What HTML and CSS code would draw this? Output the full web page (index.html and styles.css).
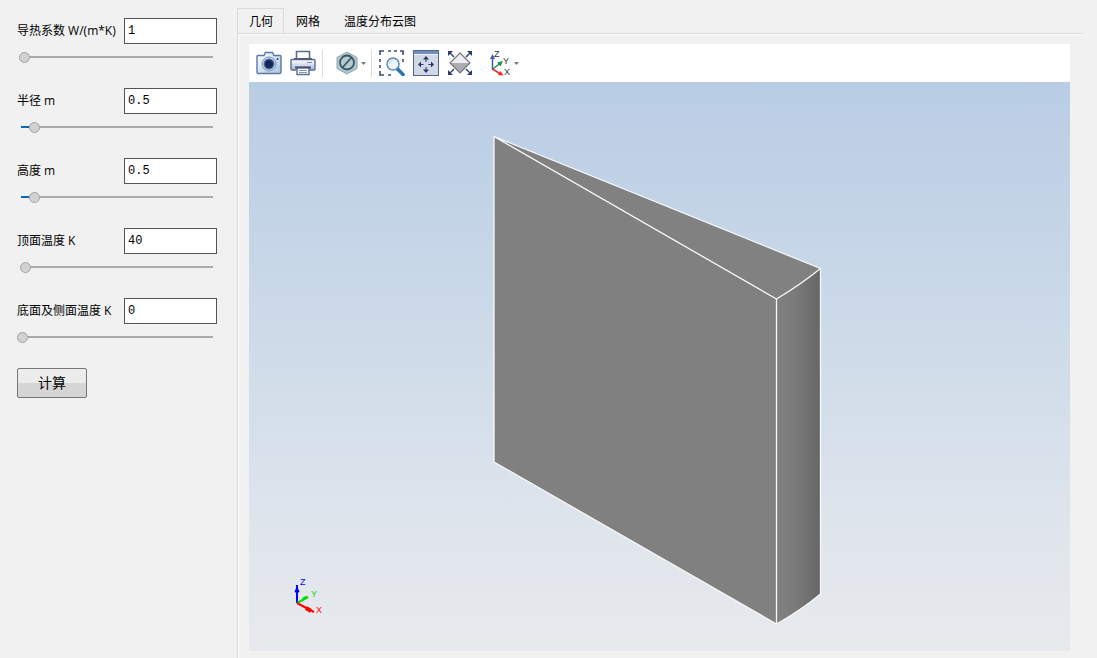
FILE: index.html
```html
<!DOCTYPE html>
<html lang="zh-CN">
<head>
<meta charset="utf-8">
<title>导热计算</title>
<link rel="stylesheet" href="styles.css">
</head>
<body>
<form class="sidebar">
  <div class="param">
    <label class="param-label" for="k">导热系数 W/(m*K)</label>
    <input class="param-value" id="k" type="text" value="1">
    <input class="slider" type="range" aria-label="导热系数" min="0" max="185" value="2" style="--fill:0px">
  </div>
  <div class="param">
    <label class="param-label" for="r">半径 m</label>
    <input class="param-value" id="r" type="text" value="0.5">
    <input class="slider" type="range" aria-label="半径" min="0" max="185" value="12" style="--fill:12px">
  </div>
  <div class="param">
    <label class="param-label" for="h">高度 m</label>
    <input class="param-value" id="h" type="text" value="0.5">
    <input class="slider" type="range" aria-label="高度" min="0" max="185" value="12" style="--fill:12px">
  </div>
  <div class="param">
    <label class="param-label" for="t1">顶面温度 K</label>
    <input class="param-value" id="t1" type="text" value="40">
    <input class="slider" type="range" aria-label="顶面温度" min="0" max="185" value="3" style="--fill:0px">
  </div>
  <div class="param">
    <label class="param-label" for="t2">底面及侧面温度 K</label>
    <input class="param-value" id="t2" type="text" value="0">
    <input class="slider" type="range" aria-label="底面及侧面温度" min="0" max="185" value="0" style="--fill:0px">
  </div>
  <button class="compute" type="button">计算</button>
</form>

<main class="workspace">
  <div class="tabs" role="tablist">
    <button class="tab tab-active" type="button" role="tab" aria-selected="true">几何</button>
    <button class="tab" type="button" role="tab" aria-selected="false">网格</button>
    <button class="tab" type="button" role="tab" aria-selected="false">温度分布云图</button>
  </div>
  <section class="panel" role="tabpanel">
    <div class="toolbar">
      <button class="tool" type="button" aria-label="截图">
        <svg width="26" height="24" viewBox="0 0 26 24">
          <defs><linearGradient id="cam" x1="0" y1="0" x2="1" y2="1"><stop offset="0" stop-color="#fff"/><stop offset="1" stop-color="#a9c4e4"/></linearGradient></defs>
          <path d="M2 4.500h6L9.500 1.500h7L18 4.500H24q1 0 1 1V21q0 1.500-1.500 1.500h-21Q1 22.500 1 21V5.500q0-1 1-1z" fill="url(#cam)" stroke="#5d77a5" stroke-width="1.400"/>
          <circle cx="13" cy="13" r="7" fill="#c8d8eb" stroke="#7f97bb"/>
          <circle cx="13" cy="13" r="5.500" fill="#54709c"/>
          <circle cx="13" cy="13" r="4.200" fill="#14285c"/>
          <circle cx="21.500" cy="8" r="1" fill="#2c4270"/>
        </svg>
      </button>
      <button class="tool" type="button" aria-label="打印">
        <svg width="26" height="26" viewBox="0 0 26 26">
          <defs><linearGradient id="prn" x1="0" y1="0" x2="0" y2="1"><stop offset="0" stop-color="#fff"/><stop offset="1" stop-color="#aab9d2"/></linearGradient></defs>
          <path d="M6.500 10V1.500h13V10" fill="#fff" stroke="#5f6c8c" stroke-width="1.600"/>
          <rect x="1" y="9.500" width="24" height="10.500" rx="1" fill="url(#prn)" stroke="#5f6c91" stroke-width="1.400"/>
          <path d="M4 8h18v2H4z" fill="#525f83"/>
          <path d="M17 12.500h5" stroke="#8190b0"/>
          <path d="M7 17.500h12v7H7z" fill="#fff" stroke="#5f6c91" stroke-width="1.400"/>
          <path d="M5 17.500h16" stroke="#40507a" stroke-width="2"/>
          <path d="M9 20.500h8M9 22.500h8" stroke="#8795b2"/>
        </svg>
      </button>
      <span class="divider"></span>
      <button class="tool tool-menu tool-hex" type="button" aria-label="选择">
        <svg width="22" height="24" viewBox="0 0 22 24">
          <path d="M11 1l10 5.500v11L11 23 1 17.500v-11z" fill="#b4c7cd" stroke="#8da6ae"/>
          <path d="M11 3.500l7.500 4.500v8L11 20.500 3.500 16V8z" fill="#c7d6da"/>
          <circle cx="11" cy="11.500" r="7" fill="#b8cace" stroke="#355967" stroke-width="1.800"/>
          <path d="M6.500 16.500l9-10" stroke="#355967" stroke-width="1.800"/>
        </svg>
        <svg class="caret" width="5" height="3" viewBox="0 0 5 3"><path d="M0 0h5L2.500 3z" fill="#777"/></svg>
      </button>
      <span class="divider"></span>
      <button class="tool" type="button" aria-label="框选缩放">
        <svg width="26" height="26" viewBox="0 0 26 26">
          <path d="M1 5V1h4M9 1h3M15 1h3M21 1h3v4M24 9v3M1 9v3M1 15v3M1 21v4h4M9 25h3" fill="none" stroke="#3c4c78" stroke-width="1.600"/>
          <path d="M18.500 19l5.500 5.500" stroke="#2476b5" stroke-width="3.600" stroke-linecap="round"/>
          <circle cx="14" cy="14" r="6" fill="#edf5fb" stroke="#5d8bac" stroke-width="1.500"/>
          <path d="M10.500 14a4 4 0 0 1 4-4" fill="none" stroke="#b9d6ea"/>
        </svg>
      </button>
      <button class="tool" type="button" aria-label="平移">
        <svg width="26" height="26" viewBox="0 0 26 26">
          <rect x=".5" y=".5" width="25" height="25" fill="#d1d9e6" stroke="#53678d"/>
          <path d="M1 1h24v3H1z" fill="#748fbd"/><path d="M1 4.500h24" stroke="#eef2f8"/>
          <g fill="#26376a"><path d="M13 6l3 3.500h-6zM13 23l3-3.500h-6zM5 14.500l3-3v6zM21 14.500l-3-3v6z"/><path d="M12.500 9h1v3h-1zM12.500 17h1v3h-1zM7 14h3.500v1H7zM15.500 14H19v1h-3.500z"/></g>
        </svg>
      </button>
      <button class="tool" type="button" aria-label="适应窗口">
        <svg width="26" height="26" viewBox="0 0 26 26">
          <path d="M13 3l10 10H3z" fill="#ededef"/><path d="M3 13h20L13 23z" fill="#acacb3"/>
          <path d="M13 3l10 10-10 10L3 13z" fill="none" stroke="#74777f" stroke-width="1.200"/>
          <path d="M2 2l5 5M24 2l-5 5M2 24l5-5M24 24l-5-5" stroke="#2d3d6c" stroke-width="1.400"/>
          <path d="M1 1h5L1 6zM25 1h-5l5 5zM1 25h5l-5-5zM25 25h-5l5-5z" fill="#2d3d6c"/>
        </svg>
      </button>
      <button class="tool tool-menu tool-axis" type="button" aria-label="视角">
        <svg width="22" height="28" viewBox="0 0 22 28">
          <path d="M3.500 21V8" stroke="#3e5cae" stroke-width="1.500"/><path d="M3.500 5l2.500 5H1z" fill="#3e5cae"/>
          <path d="M3.500 20l7-5" stroke="#1d9148" stroke-width="1.500"/><path d="M14 12l-2.500 5.500-3.500-4z" fill="#1d9148"/>
          <path d="M3.500 20l8 5" stroke="#ec2727" stroke-width="1.500"/><path d="M14.500 26.500l-5.500-.5 2.500-4z" fill="#ec2727"/>
          <g class="axis-text" fill="#333"><text x="5" y="8">Z</text><text x="14" y="15">Y</text><text x="15" y="26">X</text></g>
        </svg>
        <svg class="caret" width="5" height="3" viewBox="0 0 5 3"><path d="M0 0h5L2.500 3z" fill="#777"/></svg>
      </button>
    </div>
    <div class="canvas">
      <svg class="scene" viewBox="0 0 821 569" role="img" aria-label="扇形柱体几何">
        <defs><linearGradient id="side" x1="0" y1="0" x2="1" y2="0"><stop offset="0" stop-color="#818181"/><stop offset=".4" stop-color="#7b7b7b"/><stop offset="1" stop-color="#666"/></linearGradient></defs>
        <path d="M245 54.500L571.500 186.500Q551 203 527.500 217z" fill="#818181"/>
        <path d="M245 54.500L527.500 217V542L245 380z" fill="#808080"/>
        <path d="M527.500 217Q551 203 571.500 186.500V512Q551 529 527.500 542z" fill="url(#side)"/>
        <path d="M245 54.500V380L527.500 542Q551 529 571.500 512V186.500Q551 203 527.500 217V542M527.500 217L245 54.500L571.500 186.500" fill="none" stroke="#f8f8f8" stroke-width="1.300" stroke-linejoin="round"/>
        <g fill="none" stroke-width="2">
          <path d="M48 521V503" stroke="#00f"/><path d="M46 510l2-5 2 5z" fill="#00f" stroke="#00f" stroke-width="1"/>
          <path d="M48 521l11-6" stroke="#0d0"/><path d="M54 517l4-2" stroke="#0d0" stroke-width="3"/>
          <path d="M48 521l17 9" stroke="#f00"/><path d="M57 526l5 3" stroke="#f00" stroke-width="4"/>
        </g>
        <g class="triad-text"><text x="51" y="503" fill="#00f">Z</text><text x="62" y="515" fill="#0d0">Y</text><text x="67" y="531" fill="#f00">X</text></g>
      </svg>
    </div>
  </section>
</main>
</body>
</html>
```
FILE: styles.css
```css
* { box-sizing: border-box; }

body {
  margin: 0;
  min-height: 100vh;
  display: flex;
  background: #f1f1f1;
  color: #000;
  font: 12px/16px "Open Sans", "Noto Sans CJK SC", sans-serif;
}

button, input { font: inherit; color: inherit; }

.sidebar {
  flex: 0 0 237px;
  padding: 18px 20px 18px 17px;
}

.param {
  display: grid;
  grid-template-columns: 1fr 93px;
  align-items: center;
  row-gap: 8px;
  height: 70px;
  align-content: start;
}

.param-label { white-space: nowrap; }

.param-value {
  width: 100%;
  height: 26px;
  padding: 0 3px;
  border: 1px solid #555;
  background: #fff;
  font: 12px/24px "Liberation Mono", monospace;
}

.slider {
  grid-column: 1 / -1;
  width: 196px;
  height: 11px;
  margin: 0;
  appearance: none;
  background: transparent;
}

.slider::-webkit-slider-runnable-track {
  height: 11px;
  background:
    linear-gradient(#0a68be, #0a68be) 4px 4px / var(--fill) 2px no-repeat,
    linear-gradient(#aaa, #aaa) 4px 4px / 100% 2px no-repeat;
}

.slider::-webkit-slider-thumb {
  appearance: none;
  width: 11px;
  height: 11px;
  border: 1px solid #a3a3a3;
  border-radius: 50%;
  background: #d2d2d2;
}

.compute {
  width: 70px;
  height: 30px;
  padding: 0;
  border: 1px solid #777;
  border-radius: 2px;
  background: linear-gradient(#ececec 50%, #d5d5d5 50%);
  font-size: 14px;
}

.workspace {
  flex: 1;
  display: flex;
  flex-direction: column;
  padding: 8px 14px 0 0;
}

.tabs { display: flex; height: 26px; }

.tab {
  padding: 1px 12px 0;
  border: 0;
  background: transparent;
}

.tab-active {
  padding: 0 10px 0 11px;
  border: 1px solid #dadada;
  border-bottom: 0;
}

.panel {
  flex: 1;
  display: flex;
  flex-direction: column;
  padding: 10px 12px 7px 11px;
  border: 1px solid #dadada;
  border-right-color: #eee;
  border-bottom: 0;
  box-shadow: inset 1px 1px #fff;
  margin-top: -1px;
}

.toolbar {
  display: flex;
  align-items: center;
  height: 38px;
  padding-left: 7px;
  gap: 8px;
  background: #fff;
}

.tool {
  display: flex;
  align-items: center;
  padding: 0;
  border: 0;
  background: transparent;
}

.tool-menu { gap: 3px; }
.tool-hex { margin: 0 -1px 0 6px; }
.tool-axis { margin-left: 8px; }

.divider {
  width: 1px;
  height: 27px;
  margin: 0 -1px 0 -2px;
  background: #dcdcdc;
}

.axis-text { font: 9px "Liberation Sans", sans-serif; }

.canvas {
  flex: 1;
  display: flex;
  background: linear-gradient(#b9cde5, #d0dce9 50%, #e1e6ed 82%, #e7e9ec);
}

.scene { flex: 1; width: 100%; min-height: 0; }

.triad-text { font: 9px "Liberation Sans", sans-serif; }
```
